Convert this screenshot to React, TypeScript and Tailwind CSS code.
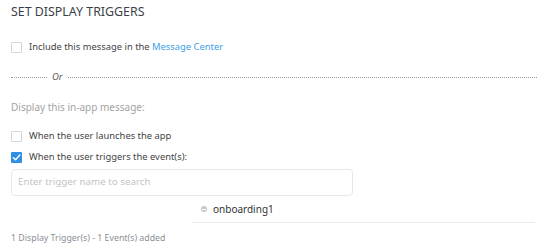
import React from "react";

function Box({ checked }: { checked?: boolean }) {
  if (checked) {
    return (
      <span className="flex h-[11px] w-[11px] shrink-0 items-center justify-center rounded-[1px] bg-[#2f8fe3]">
        <svg width="9" height="9" viewBox="0 0 10 10" fill="none">
          <path d="M1.5 5.2 L4 7.5 L8.7 2.3" stroke="white" strokeWidth="1.6" strokeLinecap="round" strokeLinejoin="round" />
        </svg>
      </span>
    );
  }
  return <span className="h-[11px] w-[11px] shrink-0 rounded-[1px] border border-[#d6d6d6] bg-white" />;
}

export default function App() {
  return (
    <div className="w-[549px] h-[250px] bg-white px-[11px] pt-[3px] text-[9.4px] text-[#444] overflow-hidden" style={{ fontFamily: '"Noto Sans", "Open Sans", sans-serif' }}>
      <div className="text-[12.4px] leading-[18px] text-[#3a3f47]">SET DISPLAY TRIGGERS</div>

      <div className="mt-[19px] flex items-center gap-[7px] h-[14px]">
        <Box />
        <span>
          Include this message in the <span className="text-[#3d9fe6]">Message Center</span>
        </span>
      </div>

      <div className="mt-[16px] flex items-center gap-[5px] h-[14px] pr-[1px]">
        <div className="w-[36px] border-t border-dotted border-[#999]" />
        <span className="italic text-[#555]">Or</span>
        <div className="flex-1 border-t border-dotted border-[#999]" />
      </div>

      <div className="mt-[16px] h-[14px] leading-[14px] text-[10px] text-[#a3a3a3]">Display this in-app message:</div>

      <div className="mt-[15px] flex items-center gap-[7px] h-[14px]">
        <Box />
        <span>When the user launches the app</span>
      </div>

      <div className="mt-[7px] flex items-center gap-[7px] h-[14px]">
        <Box checked />
        <span>When the user triggers the event(s):</span>
      </div>

      <div className="mt-[5px] w-[342px] h-[27px] rounded-[4px] border border-[#e8e8e8] flex items-center px-[6px] text-[9.8px] text-[#c4c4c4]">
        Enter trigger name to search
      </div>

      <div className="ml-[181px] mr-[3px] h-[27px] border-b border-[#ececec] flex items-center gap-[6px] pl-[9px]">
        <span className="h-[6px] w-[6px] rounded-full bg-[#c8c8c8] flex items-center justify-center">
          <span className="h-[1px] w-[4px] bg-white" />
        </span>
        <span className="text-[10px] text-[#333]">onboarding1</span>
      </div>

      <div className="mt-[9px] text-[8.8px] text-[#8a8f96]">1 Display Trigger(s) - 1 Event(s) added</div>
    </div>
  );
}
